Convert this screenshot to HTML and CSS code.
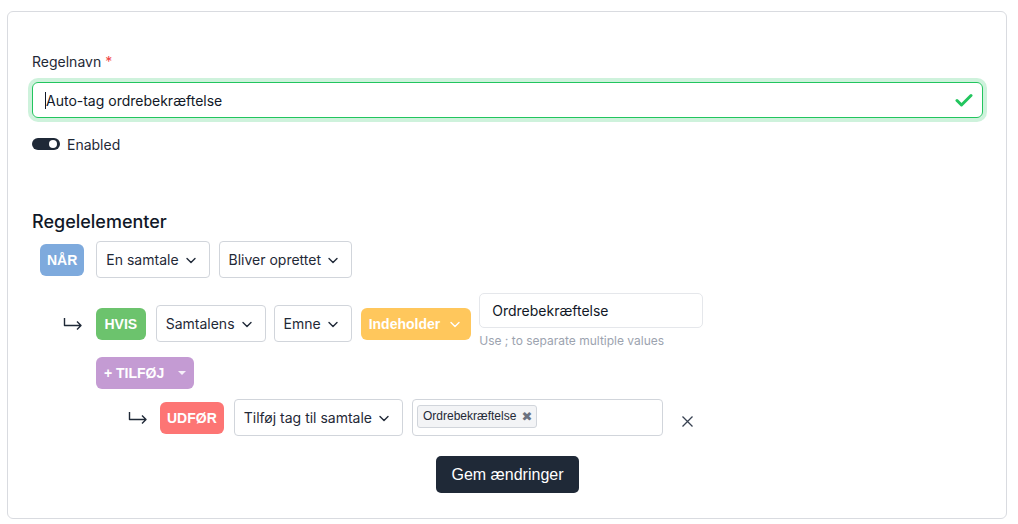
FILE: index.html
```html
<!DOCTYPE html>
<html lang="da">
<head>
<meta charset="utf-8">
<title>Regel</title>
<link rel="stylesheet" href="styles.css">
</head>
<body>
<div class="card">
  <div class="field">
    <label class="label">Regelnavn <span class="req">*</span></label>
    <div class="input input-valid">
      <span class="caret"></span><span class="input-text">Auto-tag ordrebekræftelse</span>
      <svg class="check" width="18" height="14" viewBox="0 0 18 14"><path d="M2 7.5 L6.5 12 L16 2.5" fill="none" stroke="#22c55e" stroke-width="3" stroke-linecap="round" stroke-linejoin="round"/></svg>
    </div>
  </div>

  <div class="toggle-row">
    <span class="toggle"><span class="knob"></span></span>
    <span class="toggle-label">Enabled</span>
  </div>

  <h2 class="section-title">Regelelementer</h2>

  <div class="rule-row when-row">
    <span class="badge badge-when">NÅR</span>
    <span class="select">En samtale <svg class="chev" width="12" height="12" viewBox="0 0 12 12"><path d="M2 4.5 L6 8.5 L10 4.5" fill="none" stroke="currentColor" stroke-width="1.4" stroke-linecap="round" stroke-linejoin="round"/></svg></span>
    <span class="select">Bliver oprettet <svg class="chev" width="12" height="12" viewBox="0 0 12 12"><path d="M2 4.5 L6 8.5 L10 4.5" fill="none" stroke="currentColor" stroke-width="1.4" stroke-linecap="round" stroke-linejoin="round"/></svg></span>
  </div>

  <div class="rule-row if-row">
    <svg class="branch" width="20" height="14" viewBox="0 0 20 14"><path d="M1.5 1 V8.5 H18 M14 4.5 L18 8.5 L14 12.5" fill="none" stroke="#1f2937" stroke-width="1.4" stroke-linejoin="round"/></svg>
    <span class="badge badge-if">HVIS</span>
    <span class="select">Samtalens <svg class="chev" width="12" height="12" viewBox="0 0 12 12"><path d="M2 4.5 L6 8.5 L10 4.5" fill="none" stroke="currentColor" stroke-width="1.4" stroke-linecap="round" stroke-linejoin="round"/></svg></span>
    <span class="select">Emne <svg class="chev" width="12" height="12" viewBox="0 0 12 12"><path d="M2 4.5 L6 8.5 L10 4.5" fill="none" stroke="currentColor" stroke-width="1.4" stroke-linecap="round" stroke-linejoin="round"/></svg></span>
    <span class="badge badge-op">Indeholder <svg class="chev" width="12" height="12" viewBox="0 0 12 12"><path d="M2 4.5 L6 8.5 L10 4.5" fill="none" stroke="currentColor" stroke-width="1.4" stroke-linecap="round" stroke-linejoin="round"/></svg></span>
    <div class="value-col">
      <div class="value-input">Ordrebekræftelse</div>
      <div class="hint">Use ; to separate multiple values</div>
    </div>
  </div>

  <div class="add-row">
    <span class="badge badge-add">+ TILFØJ <svg class="caret-down" width="10" height="6" viewBox="0 0 10 6"><path d="M1 1 H9 L5 5 Z" fill="#fff" fill-opacity="0.85"/></svg></span>
  </div>

  <div class="rule-row do-row">
    <svg class="branch" width="20" height="14" viewBox="0 0 20 14"><path d="M1.5 1 V8.5 H18 M14 4.5 L18 8.5 L14 12.5" fill="none" stroke="#1f2937" stroke-width="1.4" stroke-linejoin="round"/></svg>
    <span class="badge badge-do">UDFØR</span>
    <span class="select">Tilføj tag til samtale <svg class="chev" width="12" height="12" viewBox="0 0 12 12"><path d="M2 4.5 L6 8.5 L10 4.5" fill="none" stroke="currentColor" stroke-width="1.4" stroke-linecap="round" stroke-linejoin="round"/></svg></span>
    <div class="tag-input">
      <span class="chip">Ordrebekræftelse <span class="chip-x">✖</span></span>
    </div>
    <svg class="remove" width="13" height="13" viewBox="0 0 13 13"><path d="M1.5 1.5 L11.5 11.5 M11.5 1.5 L1.5 11.5" fill="none" stroke="#374151" stroke-width="1.3"/></svg>
  </div>

  <div class="actions">
    <button class="btn-save">Gem ændringer</button>
  </div>
</div>
</body>
</html>
```

FILE: styles.css
```css
* { box-sizing: border-box; }

body {
  margin: 0;
  padding: 11px 12px 0 7px;
  background: #fff;
  font-family: Inter, "Noto Sans", sans-serif;
  color: #1f2937;
}

.card {
  width: 1000px;
  height: 508px;
  border: 1px solid #d9dbe0;
  border-radius: 6px;
  padding: 42px 23px 0 24px;
}

.label {
  display: block;
  font-size: 14px;
  line-height: 16px;
  margin-bottom: 12px;
  color: #1f2937;
}
.req { color: #ef4444; }

.input {
  display: flex;
  align-items: center;
  height: 36px;
  border: 1px solid #22c55e;
  border-radius: 6px;
  padding: 0 9px 0 12px;
  font-size: 14px;
}
.input-valid { box-shadow: 0 0 0 4px rgba(34, 197, 94, 0.22); }
.caret {
  width: 1px;
  height: 17px;
  background: #111827;
}
.input-text { flex: 1; color: #111827; }
.check { display: block; }

.toggle-row {
  display: flex;
  align-items: center;
  gap: 7px;
  margin-top: 18px;
  height: 16px;
}
.toggle {
  display: flex;
  align-items: center;
  justify-content: flex-end;
  width: 28px;
  height: 12px;
  border-radius: 6px;
  background: #1f2937;
  padding-right: 3px;
}
.knob {
  width: 8px;
  height: 8px;
  border-radius: 50%;
  background: #fff;
}
.toggle-label { font-size: 14px; }

.section-title {
  margin: 58px 0 7px;
  font-size: 18px;
  line-height: 24px;
  font-weight: 500;
  color: #111827;
}

.rule-row {
  display: flex;
  align-items: center;
}

.when-row { padding-left: 8px; gap: 9px; }
.when-row .badge { margin-right: 3px; }

.if-row { margin-top: 15px; padding-left: 31px; gap: 8px; }
.if-row .branch { margin-right: 5px; }
.if-row .badge-if { margin-right: 2px; }
.if-row .badge-op { margin-left: 1px; }

.do-row { margin-top: 10px; padding-left: 96px; gap: 9px; }
.do-row .branch { margin-right: 3px; }
.do-row .badge-do { margin-right: 1px; }

.branch { display: block; }

.badge {
  display: inline-flex;
  align-items: center;
  height: 32px;
  padding: 0 7px;
  border-radius: 6px;
  font-family: "Liberation Sans", Arial, sans-serif;
  font-weight: 700;
  font-size: 14px;
  color: #fff;
}
.badge-when { background: #7eaadd; }
.badge-if { background: #6cc36d; padding: 0 8.5px; }
.badge-op { background: #ffc75c; padding: 0 10px 0 8px; gap: 9px; }
.badge-add { background: #c49bd3; padding: 0 7px 0 8px; gap: 13px; }
.badge-do { background: #fd7574; }

.select {
  display: inline-flex;
  align-items: center;
  height: 37px;
  padding: 0 12px 0 9px;
  gap: 6px;
  border: 1px solid #d1d5db;
  border-radius: 4px;
  font-size: 14px;
  color: #1f2937;
  background: #fff;
}
.chev { display: block; }

.value-input {
  width: 224px;
  height: 35px;
  display: flex;
  align-items: center;
  padding: 0 12px;
  border: 1px solid #e5e7eb;
  border-radius: 5px;
  font-size: 14px;
  color: #111827;
}
.hint {
  margin: 5px 0 6px;
  font-size: 12px;
  line-height: 15px;
  color: #9ca3af;
}

.add-row {
  display: flex;
  margin-top: 3px;
  padding-left: 64px;
}

.tag-input {
  width: 251px;
  height: 37px;
  border: 1px solid #d1d5db;
  border-radius: 4px;
  padding: 4px;
}
.chip {
  display: inline-flex;
  align-items: center;
  gap: 5px;
  height: 23px;
  padding: 0 4px 0 5px;
  border: 1px solid #d1d5db;
  border-radius: 3px;
  background: #f3f4f6;
  font-family: "Liberation Sans", Arial, sans-serif;
  font-size: 12px;
  color: #1f2937;
}
.chip-x {
  font-family: "DejaVu Sans", sans-serif;
  font-size: 13px;
  line-height: 1;
  color: #6b7280;
}

.remove { display: block; margin-left: 9px; margin-top: 8px; }

.actions {
  display: flex;
  justify-content: center;
  margin-top: 20px;
}
.btn-save {
  height: 37px;
  padding: 0 15px;
  border: none;
  border-radius: 5px;
  background: #1f2937;
  color: #fff;
  font-family: "Liberation Sans", Arial, sans-serif;
  font-size: 16px;
}
```
